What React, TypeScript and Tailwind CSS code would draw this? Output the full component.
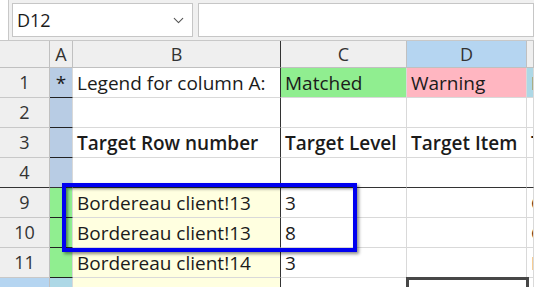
import { ChevronDown } from "lucide-react";

type Cell = {
  text?: string;
  bg?: string;
  bold?: boolean;
  center?: boolean;
};

const COLS = ["A", "B", "C", "D", "E"];

const ROWS: { n: string; cells: Cell[]; freeze?: boolean }[] = [
  {
    n: "1",
    cells: [
      { text: "*", bg: "bg-[#b8cce4]", center: true },
      { text: "Legend for column A:" },
      { text: "Matched", bg: "bg-[#90ee90]" },
      { text: "Warning", bg: "bg-[#ffb6c1]" },
      { text: "Missing", bg: "bg-[#add8e6]" },
    ],
  },
  {
    n: "2",
    cells: [{ bg: "bg-[#b8cce4]" }, {}, {}, {}, {}],
  },
  {
    n: "3",
    cells: [
      { bg: "bg-[#b8cce4]" },
      { text: "Target Row number", bold: true },
      { text: "Target Level", bold: true },
      { text: "Target Item", bold: true },
      { text: "Target", bold: true },
    ],
  },
  {
    n: "4",
    freeze: true,
    cells: [{ bg: "bg-[#b8cce4]" }, {}, {}, {}, {}],
  },
  {
    n: "9",
    cells: [
      { bg: "bg-[#90ee90]" },
      { text: "Bordereau client!13", bg: "bg-[#ffffe0]" },
      { text: "3" },
      {},
      { text: "Client" },
    ],
  },
  {
    n: "10",
    cells: [
      { bg: "bg-[#90ee90]" },
      { text: "Bordereau client!13", bg: "bg-[#ffffe0]" },
      { text: "8" },
      {},
      { text: "Client" },
    ],
  },
  {
    n: "11",
    cells: [
      { bg: "bg-[#90ee90]" },
      { text: "Bordereau client!14", bg: "bg-[#ffffe0]" },
      { text: "3" },
      {},
      { text: "Line" },
    ],
  },
  {
    n: "12",
    cells: [{ bg: "bg-[#add8e6]" }, { bg: "bg-[#ffffe0]" }, {}, {}, {}],
  },
];

const GRID = "grid grid-cols-[50px_23px_208px_126px_120px_1fr]";

export default function App() {
  return (
    <div
      className="h-[287px] w-[534px] overflow-hidden bg-white text-[#1b1b1b]"
      style={{ fontFamily: '"Open Sans", "Noto Sans", sans-serif' }}
    >
      <div className="ml-[8px] flex h-[40px] items-center gap-[5px] border-l border-[#c8c8c8] bg-[#f0f0f0] pl-[3px]">
        <div className="flex h-[34px] w-[181px] items-center justify-between border border-[#c6c6c6] bg-white pl-[4px] pr-[5px] text-[18px]">
          <span>D12</span>
          <ChevronDown size={17} strokeWidth={1.5} className="text-[#555]" />
        </div>
        <div className="h-[34px] flex-1 border border-[#c6c6c6] bg-white" />
      </div>

      <div className="relative">
        <div className={`${GRID} h-[28px] border-t border-[#c8c8c8] text-[18px] text-[#333]`}>
          <div className="border-b border-r border-[#c0c0c0] bg-[#efefef]" />
          {COLS.map((c) => (
            <div
              key={c}
              className={`flex items-center overflow-hidden border-b border-r border-[#c0c0c0] ${
                c === "D" ? "bg-[#b5d5f1]" : "bg-[#efefef]"
              } ${c === "B" ? "border-r-[#333]" : ""}`}
            >
              <span className={`shrink-0 text-center ${c === "E" ? "w-[120px]" : "w-full"}`}>
                {c}
              </span>
            </div>
          ))}
        </div>

        {ROWS.map((row) => (
          <div key={row.n} className={`${GRID} h-[30px] text-[19px]`}>
            <div
              className={`flex items-center justify-center border-b border-r border-r-[#c0c0c0] text-[18px] ${
                row.freeze ? "border-b-[#333]" : "border-b-[#c8c8c8]"
              } ${row.n === "12" ? "bg-[#b5d5f1] pt-[8px]" : "bg-[#efefef]"} text-[#333]`}
            >
              {row.n}
            </div>
            {row.cells.map((cell, i) => (
              <div
                key={i}
                className={`flex items-center overflow-hidden whitespace-nowrap border-b border-r pt-[2px] leading-none ${
                  cell.center ? "justify-center" : "pl-[4px]"
                } ${cell.bg ?? "bg-white"} ${cell.bold ? "font-semibold" : ""} ${
                  i === 1 ? "border-r-[#333]" : "border-r-[#d9d9d9]"
                } ${
                  row.freeze
                    ? "border-b-[#333]"
                    : i === 0
                    ? "border-b-[#222]"
                    : "border-b-[#d9d9d9]"
                }`}
              >
                {cell.text}
              </div>
            ))}
          </div>
        ))}

        <div className="pointer-events-none absolute left-[62px] top-[143px] h-[69px] w-[295px] border-4 border-[#0000f0] shadow-[2px_2px_3px_rgba(0,0,0,0.45),inset_2px_2px_3px_rgba(0,0,0,0.45)]" />
        <div className="pointer-events-none absolute left-[406px] top-[237px] h-[32px] w-[123px] border-[3px] border-[#474747]" />
      </div>
    </div>
  );
}
